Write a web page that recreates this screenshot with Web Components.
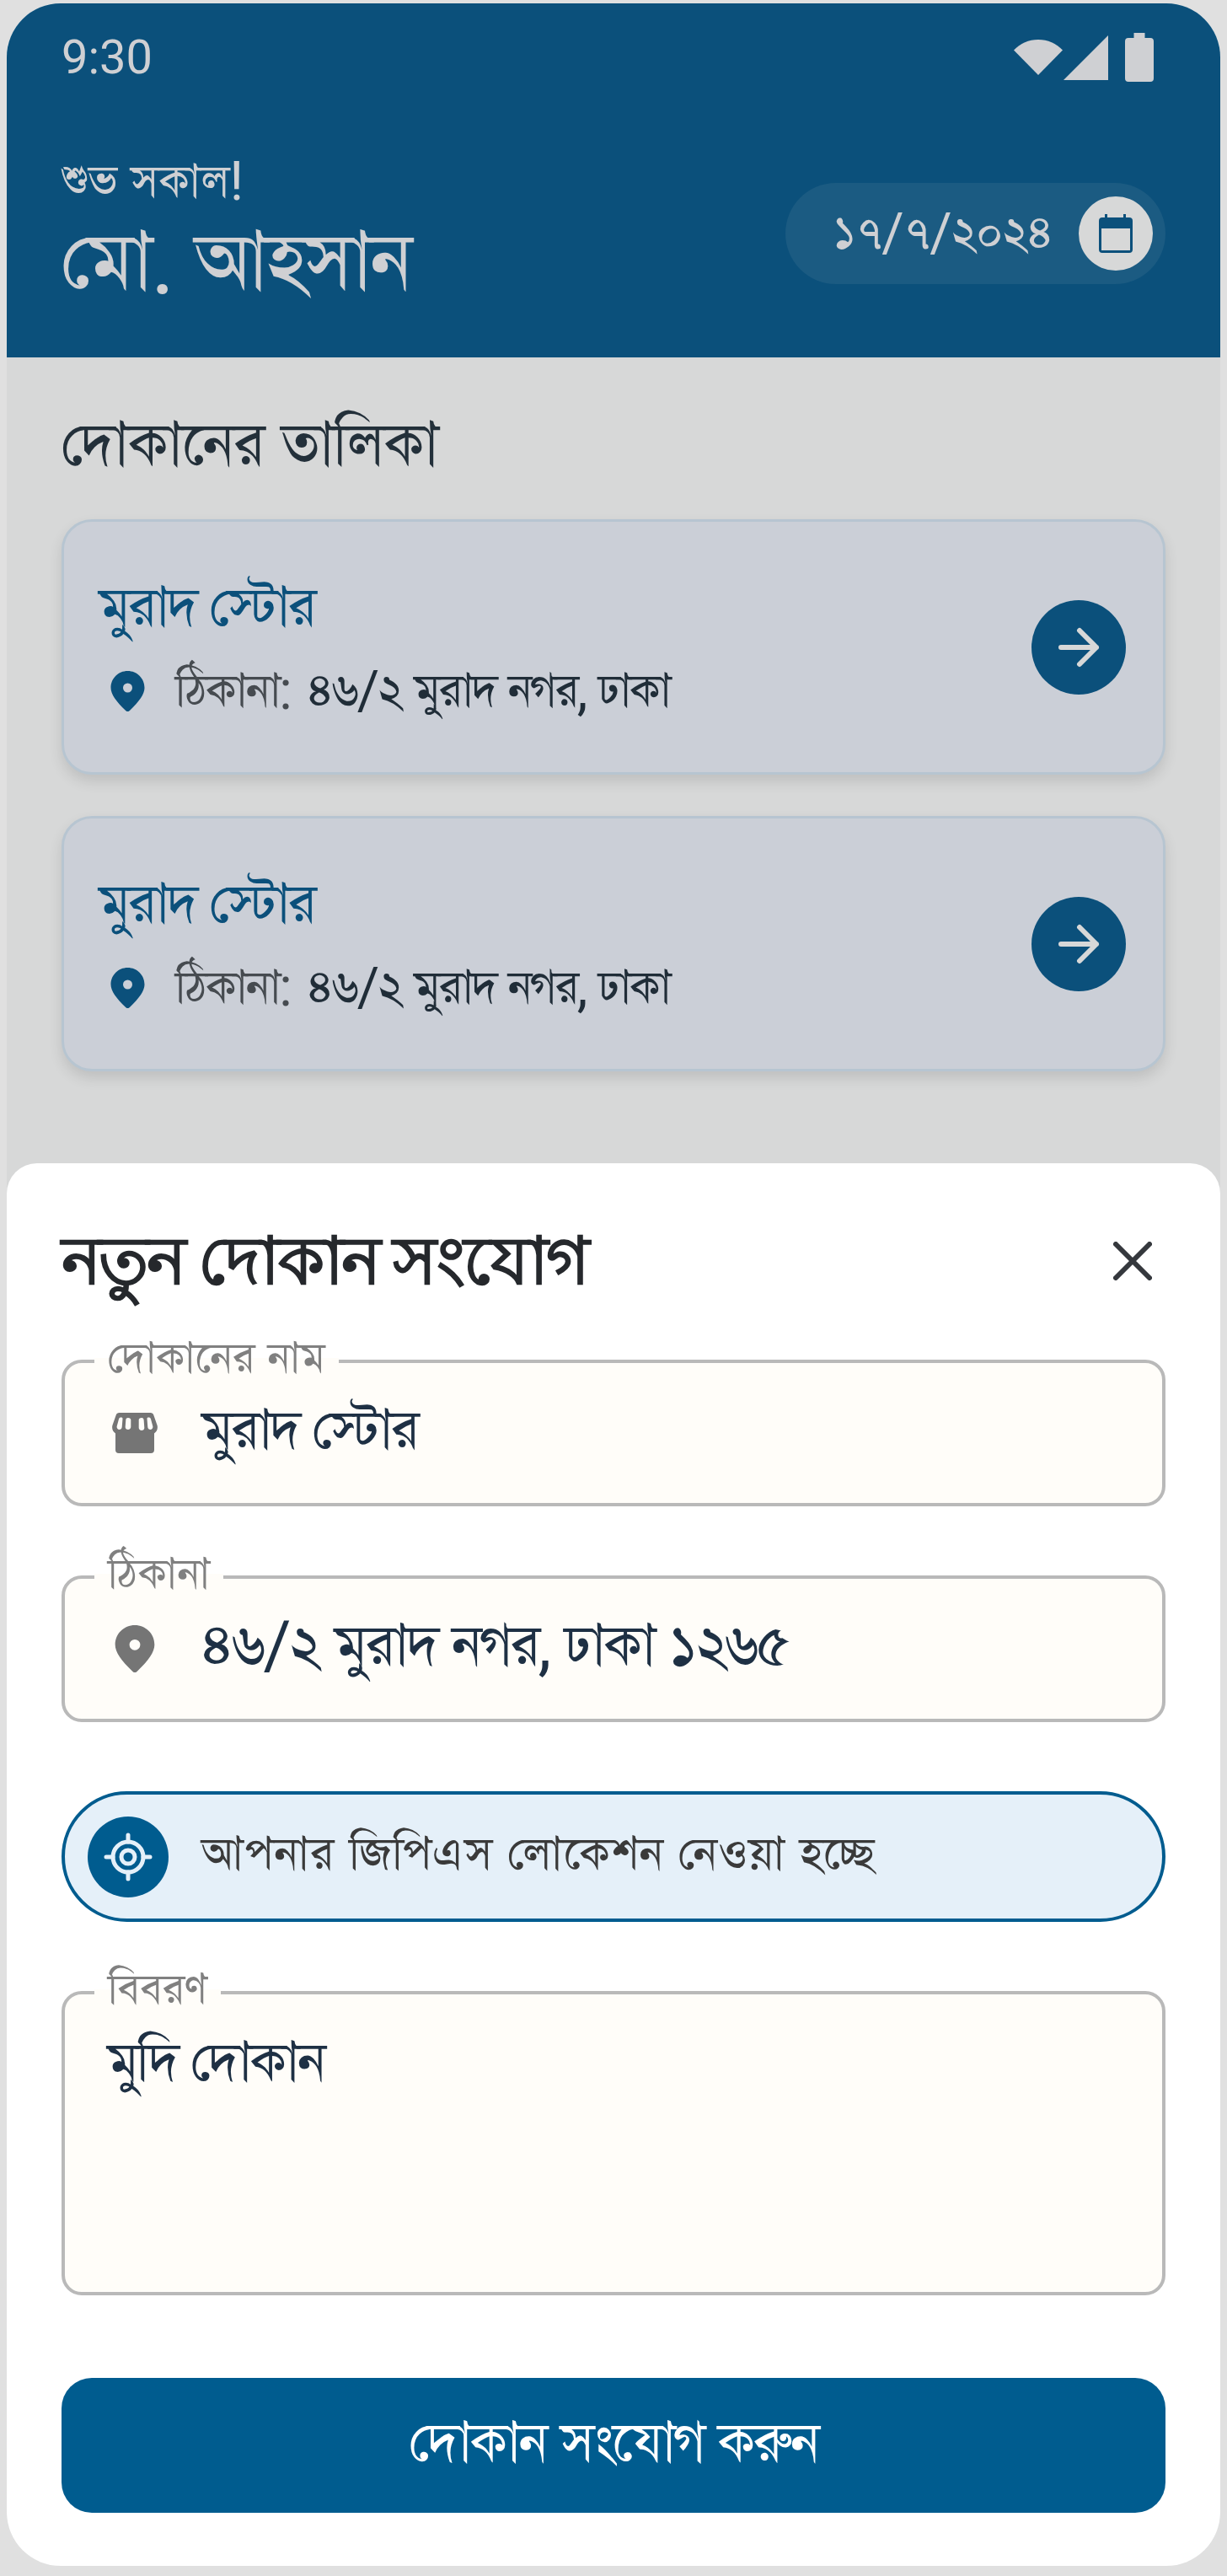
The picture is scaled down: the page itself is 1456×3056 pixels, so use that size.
<!DOCTYPE html>
<html lang="bn">
<head>
<meta charset="utf-8">
<title>দোকানের তালিকা</title>
<style>
  html, body { margin: 0; padding: 0; background: #e0e0e0; }
  body { font-family: Roboto, FreeSerif, sans-serif; }
</style>
</head>
<body>

<phone-frame>
  <app-header greeting="শুভ সকাল!" name="মো. আহসান" date="১৭/৭/২০২৪"></app-header>
  <shop-list heading="দোকানের তালিকা">
    <shop-card name="মুরাদ স্টোর" label="ঠিকানা:" address="৪৬/২ মুরাদ নগর, ঢাকা"></shop-card>
    <shop-card name="মুরাদ স্টোর" label="ঠিকানা:" address="৪৬/২ মুরাদ নগর, ঢাকা"></shop-card>
  </shop-list>
  <add-shop-sheet slot="sheet" heading="নতুন দোকান সংযোগ">
    <form-field label="দোকানের নাম" icon="store" value="মুরাদ স্টোর" style="--value-size: 76px"></form-field>
    <form-field label="ঠিকানা" icon="pin" value="৪৬/২ মুরাদ নগর, ঢাকা ১২৬৫" style="margin-top: 82px"></form-field>
    <gps-status text="আপনার জিপিএস লোকেশন নেওয়া হচ্ছে" style="margin-top: 82px"></gps-status>
    <form-field label="বিবরণ" value="মুদি দোকান" multiline style="margin-top: 82px; --value-size: 76px"></form-field>
    <primary-button text="দোকান সংযোগ করুন" style="margin-top: 98px"></primary-button>
  </add-shop-sheet>
</phone-frame>

<script>
// shared icons, sized by the caller
const icons = {
  pin: `<svg viewBox="0 0 40 48" fill="currentColor"><path fill-rule="evenodd" d="M20 0C9 0 0 8.600 0 20c0 7.400 6.200 16 17.600 27a3.400 3.400 0 0 0 4.800 0C33.800 36 40 27.400 40 20 40 8.600 31 0 20 0zm0 14.500a5.500 5.500 0 1 1 0 11 5.500 5.500 0 0 1 0-11z"/></svg>`,
  store: `<svg viewBox="0 0 54 48" fill="currentColor"><path fill-rule="evenodd" d="M8.500 0h37a4 4 0 0 1 3.800 2.800L53.600 15c1 4-.6 7.600-3.600 9.600V44a4 4 0 0 1-4 4H8a4 4 0 0 1-4-4V24.600C1 22.600-.6 19 .4 15L4.700 2.800A4 4 0 0 1 8.500 0zM8 7.500 5.700 16c-.5 2 1 4 2.800 4 1.700 0 3-1.200 3.200-3L12.500 7c-.2-2-3.800-2-4.500.5zM19 6c-1.800 0-2.700 1-2.700 2.500l-.6 8.500c0 1.700 1.500 3 3.300 3s3.300-1.400 3.300-3.200V8.500C22.300 7 21 6 19 6zm16 0c-2 0-3.300 1-3.300 2.500v9.300c0 1.800 1.500 3.200 3.300 3.200s3.300-1.300 3.300-3l-.6-8.500C37.700 7 36.800 6 35 6zm11 1.500C45.300 5 41.700 5 41.500 7l.8 10c.2 1.800 1.500 3 3.200 3 1.800 0 3.300-2 2.800-4L46 7.500z"/></svg>`
};

class PhoneFrame extends HTMLElement {
  constructor() {
    super();
    this.attachShadow({ mode: 'open' }).innerHTML = `
      <style>
        :host {
          display: block;
          position: relative;
          width: 1440px;
          height: 3040px;
          margin: 4px 8px 12px;
          border-radius: 64px;
          overflow: hidden;
          background: #fff;
          font-family: Roboto, FreeSerif, sans-serif;
        }
        .scrim {
          position: absolute;
          inset: 0;
          background: rgba(56, 62, 62, .2);
        }
        .sheet {
          position: absolute;
          left: 0;
          right: 0;
          bottom: 0;
        }
      </style>
      <slot></slot>
      <div class="scrim"></div>
      <div class="sheet"><slot name="sheet"></slot></div>
    `;
  }
}

class StatusBar extends HTMLElement {
  constructor() {
    super();
    this.attachShadow({ mode: 'open' }).innerHTML = `
      <style>
        :host {
          display: flex;
          align-items: center;
          justify-content: space-between;
          height: 68px;
          color: #f5f5f9;
        }
        .time { font-size: 56px; line-height: 68px; }
        .icons { display: flex; align-items: center; margin-right: 14px; }
        svg { display: block; fill: #f5f5f9; }
        .wifi { width: 58px; height: 42px; }
        .signal { width: 53px; height: 53px; margin-left: 1px; }
        .battery { width: 34px; height: 58px; margin-left: 20px; }
      </style>
      <span class="time">9:30</span>
      <div class="icons">
        <svg class="wifi" viewBox="0 0 58 42"><path d="M0 12.500C7.500 4.500 18 0 29 0s21.500 4.500 29 12.500L29 42z"/></svg>
        <svg class="signal" viewBox="0 0 53 53"><path d="M53 0v53H0z"/></svg>
        <svg class="battery" viewBox="0 0 34 58"><path d="M10.500 0h13v6H30a4 4 0 0 1 4 4v44a4 4 0 0 1-4 4H4a4 4 0 0 1-4-4V10a4 4 0 0 1 4-4h6.500z"/></svg>
      </div>
    `;
  }
}

class DateChip extends HTMLElement {
  static get observedAttributes() {
    return ['date'];
  }

  constructor() {
    super();
    this.attachShadow({ mode: 'open' }).innerHTML = `
      <style>
        :host {
          display: flex;
          align-items: center;
          justify-content: space-between;
          box-sizing: border-box;
          width: 451px;
          height: 120px;
          padding: 0 15px 0 56px;
          border-radius: 60px;
          background: rgba(255, 255, 255, .08);
          color: #f5f5f9;
        }
        .text { font-size: 64px; letter-spacing: -.9px; line-height: 72px; white-space: nowrap; }
        .badge {
          display: flex;
          align-items: center;
          justify-content: center;
          width: 88px;
          height: 88px;
          border-radius: 50%;
          background: #fff;
          color: #00568b;
        }
        svg { display: block; width: 40px; height: 46px; }
      </style>
      <span class="text"></span>
      <div class="badge">
        <svg viewBox="0 0 40 46"><path fill="currentColor" fill-rule="evenodd" d="M7 0h3v4h19V0h3v4h4a4 4 0 0 1 4 4v34a4 4 0 0 1-4 4H4a4 4 0 0 1-4-4V8a4 4 0 0 1 4-4h3zM3 17v26h34V17z"/></svg>
      </div>
    `;
  }

  attributeChangedCallback(name, old, value) {
    this.shadowRoot.querySelector('.text').textContent = value;
  }
}

class AppHeader extends HTMLElement {
  constructor() {
    super();
    this.attachShadow({ mode: 'open' }).innerHTML = `
      <style>
        :host {
          display: block;
          box-sizing: border-box;
          height: 420px;
          padding: 30px 65px 0;
          background: #00568b;
          color: #f5f5f9;
        }
        .row {
          display: flex;
          align-items: center;
          justify-content: space-between;
          margin-top: 78px;
        }
        .greeting { font-size: 64px; line-height: 72px; }
        .name { font-size: 112px; letter-spacing: -2.400px; line-height: 112px; margin-top: 2px; }
        date-chip { margin-top: 8px; }
      </style>
      <status-bar></status-bar>
      <div class="row">
        <div>
          <div class="greeting"></div>
          <div class="name"></div>
        </div>
        <date-chip></date-chip>
      </div>
    `;
    const s = this.shadowRoot;
    s.querySelector('.greeting').textContent = this.getAttribute('greeting');
    s.querySelector('.name').textContent = this.getAttribute('name');
    s.querySelector('date-chip').setAttribute('date', this.getAttribute('date'));
  }
}

class ShopList extends HTMLElement {
  constructor() {
    super();
    this.attachShadow({ mode: 'open' }).innerHTML = `
      <style>
        :host { display: block; padding: 62px 65px 0; }
        h2 {
          margin: 0 0 46px;
          font-size: 84px;
          letter-spacing: -1px;
          line-height: 84px;
          font-weight: 400;
          color: #1f2d3a;
        }
        .list { display: flex; flex-direction: column; gap: 49px; }
      </style>
      <h2></h2>
      <div class="list"><slot></slot></div>
    `;
    this.shadowRoot.querySelector('h2').textContent = this.getAttribute('heading');
  }
}

class ShopCard extends HTMLElement {
  constructor() {
    super();
    this.attachShadow({ mode: 'open' }).innerHTML = `
      <style>
        :host {
          display: flex;
          align-items: center;
          justify-content: space-between;
          box-sizing: border-box;
          height: 303px;
          padding: 0 44px 0 41px;
          border: 3px solid #d8e8f7;
          border-radius: 36px;
          background: #f0f4fe;
          box-shadow: 0 8px 16px rgba(0, 0, 0, .12);
        }
        .name { font-size: 76px; letter-spacing: -2.400px; line-height: 80px; color: #00568b; }
        .line {
          display: flex;
          align-items: center;
          margin-top: 24px;
          margin-left: 14px;
          font-size: 64px;
          letter-spacing: -1.900px;
          line-height: 72px;
          color: #1b2a38;
        }
        .line svg { width: 41px; height: 48px; color: #00568b; margin-right: 36px; }
        .label { color: #4a4f55; margin-right: 20px; }
        .go {
          display: flex;
          align-items: center;
          justify-content: center;
          width: 112px;
          height: 112px;
          border-radius: 50%;
          background: #00568b;
        }
        .go svg { width: 52px; height: 52px; }
      </style>
      <div>
        <div class="name"></div>
        <div class="line">${icons.pin}<span class="label"></span><span class="addr"></span></div>
      </div>
      <div class="go">
        <svg viewBox="0 0 52 52" fill="none" stroke="#fff" stroke-width="6" stroke-linecap="round" stroke-linejoin="round"><path d="M5 26h42M27 6l20 20-20 20"/></svg>
      </div>
    `;
    const s = this.shadowRoot;
    s.querySelector('.name').textContent = this.getAttribute('name');
    s.querySelector('.label').textContent = this.getAttribute('label');
    s.querySelector('.addr').textContent = this.getAttribute('address');
  }
}

class AddShopSheet extends HTMLElement {
  constructor() {
    super();
    this.attachShadow({ mode: 'open' }).innerHTML = `
      <style>
        :host {
          display: block;
          box-sizing: border-box;
          height: 1664px;
          padding: 64px 65px;
          background: #fff;
          border-radius: 36px 36px 0 0;
        }
        .top {
          display: flex;
          align-items: center;
          justify-content: space-between;
          height: 104px;
          margin-bottom: 65px;
        }
        h3 {
          margin: 0;
          font-size: 79px;
          letter-spacing: -2.600px;
          line-height: 104px;
          font-weight: 700;
          color: #25282c;
        }
        svg { width: 46px; height: 46px; margin-right: 16px; }
      </style>
      <div class="top">
        <h3></h3>
        <svg viewBox="0 0 46 46" fill="none" stroke="#35383d" stroke-width="6" stroke-linecap="round"><path d="M3 3l40 40M43 3L3 43"/></svg>
      </div>
      <slot></slot>
    `;
    this.shadowRoot.querySelector('h3').textContent = this.getAttribute('heading');
  }
}

class FormField extends HTMLElement {
  constructor() {
    super();
    const multi = this.hasAttribute('multiline');
    const iconName = this.getAttribute('icon');
    const icon = icons[iconName] || '';
    this.attachShadow({ mode: 'open' }).innerHTML = `
      <style>
        :host {
          display: flex;
          align-items: ${multi ? 'flex-start' : 'center'};
          position: relative;
          box-sizing: border-box;
          height: ${multi ? 361 : 174}px;
          padding: ${multi ? '38px 50px' : '0 60px 0 56px'};
          border: 4px solid #b9b9b9;
          border-radius: 24px;
          background: #fffdf9;
        }
        .legend {
          position: absolute;
          left: 35px;
          top: -36px;
          padding: 0 16px;
          font-size: 60px;
          line-height: 60px;
          color: #808080;
          white-space: nowrap;
          background: linear-gradient(#fff 50%, #fffdf9 50%);
        }
        .icon { display: flex; width: 106px; flex: none; color: #757575; }
        .store svg { width: 54px; height: 48px; }
        .pin svg { width: 48px; height: 56px; margin-left: 3px; }
        .value { font-size: var(--value-size, 80px); letter-spacing: -2.400px; line-height: 84px; color: #1e3044; white-space: nowrap; margin-bottom: 8px; }
      </style>
      <span class="legend"></span>
      ${icon ? `<span class="icon ${iconName}">${icon}</span>` : ''}
      <span class="value"></span>
    `;
    const s = this.shadowRoot;
    s.querySelector('.legend').textContent = this.getAttribute('label');
    s.querySelector('.value').textContent = this.getAttribute('value');
  }
}

class GpsStatus extends HTMLElement {
  constructor() {
    super();
    this.attachShadow({ mode: 'open' }).innerHTML = `
      <style>
        :host {
          display: flex;
          align-items: center;
          box-sizing: border-box;
          height: 155px;
          padding: 0 27px;
          border: 4px solid #005c8f;
          border-radius: 78px;
          background: #e5f0f9;
        }
        .badge {
          display: flex;
          align-items: center;
          justify-content: center;
          flex: none;
          width: 96px;
          height: 96px;
          border-radius: 50%;
          background: #005c8f;
          margin-right: 39px;
        }
        svg { width: 58px; height: 58px; }
        span { font-size: 64px; letter-spacing: 1.100px; line-height: 72px; color: #3a3a3a; white-space: nowrap; margin-bottom: 6px; }
      </style>
      <div class="badge">
        <svg viewBox="0 0 58 58" fill="none" stroke="#e5f0f9" stroke-width="5" stroke-linecap="round">
          <circle cx="29" cy="29" r="18"/><circle cx="29" cy="29" r="8"/>
          <path d="M29 3v8M29 47v8M3 29h8M47 29h8"/>
        </svg>
      </div>
      <span></span>
    `;
    this.shadowRoot.querySelector('span').textContent = this.getAttribute('text');
  }
}

class PrimaryButton extends HTMLElement {
  constructor() {
    super();
    this.attachShadow({ mode: 'open' }).innerHTML = `
      <style>
        :host {
          display: flex;
          align-items: center;
          justify-content: center;
          height: 160px;
          border-radius: 36px;
          background: #005c8f;
          color: #fff;
          font-size: 78px;
          letter-spacing: -2.500px;
          line-height: 84px;
        }
        span { margin-bottom: 6px; }
      </style>
      <span></span>
    `;
    this.shadowRoot.querySelector('span').textContent = this.getAttribute('text');
  }
}

customElements.define('phone-frame', PhoneFrame);
customElements.define('status-bar', StatusBar);
customElements.define('date-chip', DateChip);
customElements.define('app-header', AppHeader);
customElements.define('shop-list', ShopList);
customElements.define('shop-card', ShopCard);
customElements.define('add-shop-sheet', AddShopSheet);
customElements.define('form-field', FormField);
customElements.define('gps-status', GpsStatus);
customElements.define('primary-button', PrimaryButton);
</script>
</body>
</html>
